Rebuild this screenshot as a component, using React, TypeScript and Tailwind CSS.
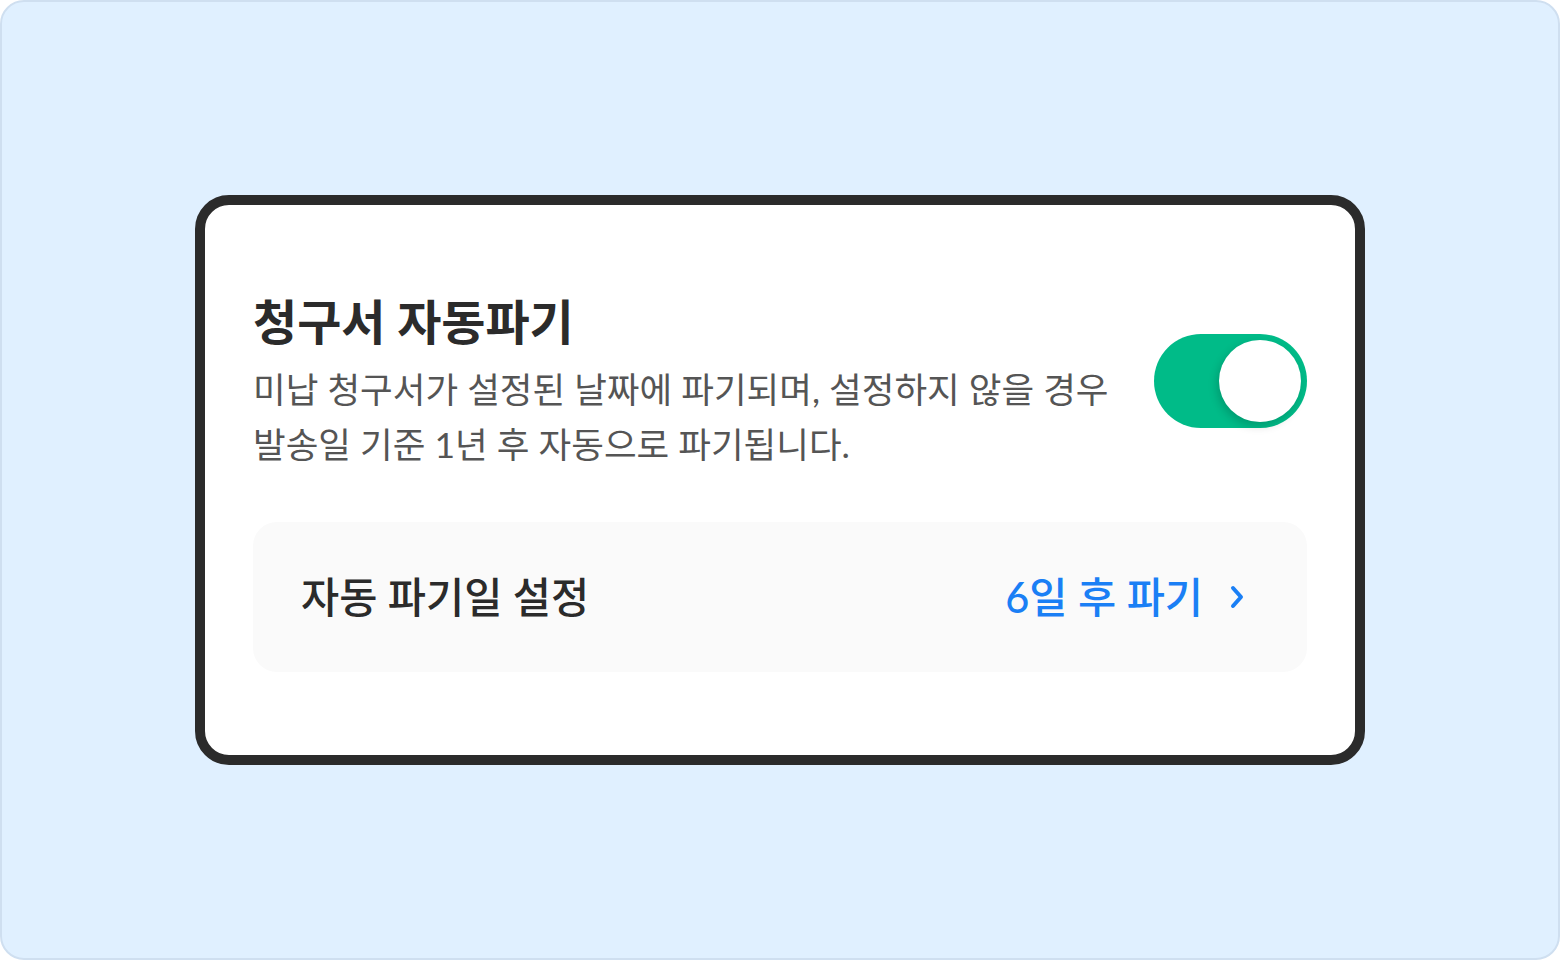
import { FC, useState } from 'react';

const font = { fontFamily: 'Lato, "Noto Sans CJK KR", sans-serif' };

const Toggle: FC<{ on: boolean, onChange: Function }> = ({ on, onChange }) => {
	return (
		<button
			onClick={() => onChange(!on)}
			className={"relative flex items-center w-[153px] h-[94px] rounded-full p-[6px] shrink-0 " + (on ? "bg-[#00bb88] justify-end" : "bg-gray-300 justify-start")}
		>
			<div className="w-[82px] h-[82px] rounded-full bg-white shadow-[-2px_4px_10px_rgba(0,0,0,0.18)]"></div>
		</button>
	)
};

const App: FC = () => {
	const [enabled, setEnabled] = useState(true);

	return (
		<div className="w-[1560px] h-[960px] bg-[#e0f0ff] border-2 border-[#cfdff0] rounded-[24px] flex items-center justify-center" style={font}>
			<div className="w-[1170px] h-[570px] bg-white border-[10px] border-[#2b2b2b] rounded-[34px] px-12 pt-[87px]">
				<div className="flex items-start justify-between">
					<div className="flex flex-col">
						<h1 className="text-[48px] leading-[60px] font-bold text-[#2b2b2b]">청구서 자동파기</h1>
						<p className="mt-[10px] text-[35.5px] leading-[55px] text-[#555555]">
							미납 청구서가 설정된 날짜에 파기되며, 설정하지 않을 경우<br />
							발송일 기준 1년 후 자동으로 파기됩니다.
						</p>
					</div>
					<div className="mt-[42px]">
						<Toggle on={enabled} onChange={setEnabled} />
					</div>
				</div>
				<div className="mt-[50px] h-[150px] bg-[#fafafa] rounded-[24px] flex items-center justify-between pl-12 pr-[62px]">
					<span className="text-[41.5px] font-medium text-[#2b2b2b]">자동 파기일 설정</span>
					<div className="flex items-center gap-[26px] text-[#1a7ff5]">
						<span className="text-[41.5px] font-medium">6일 후 파기</span>
						<svg width="16" height="26" viewBox="0 0 16 26" fill="none" stroke="currentColor" strokeWidth="4" strokeLinecap="round" strokeLinejoin="round">
							<polyline points="4 4 12 13 4 22"></polyline>
						</svg>
					</div>
				</div>
			</div>
		</div>
	)
};

export default App;
